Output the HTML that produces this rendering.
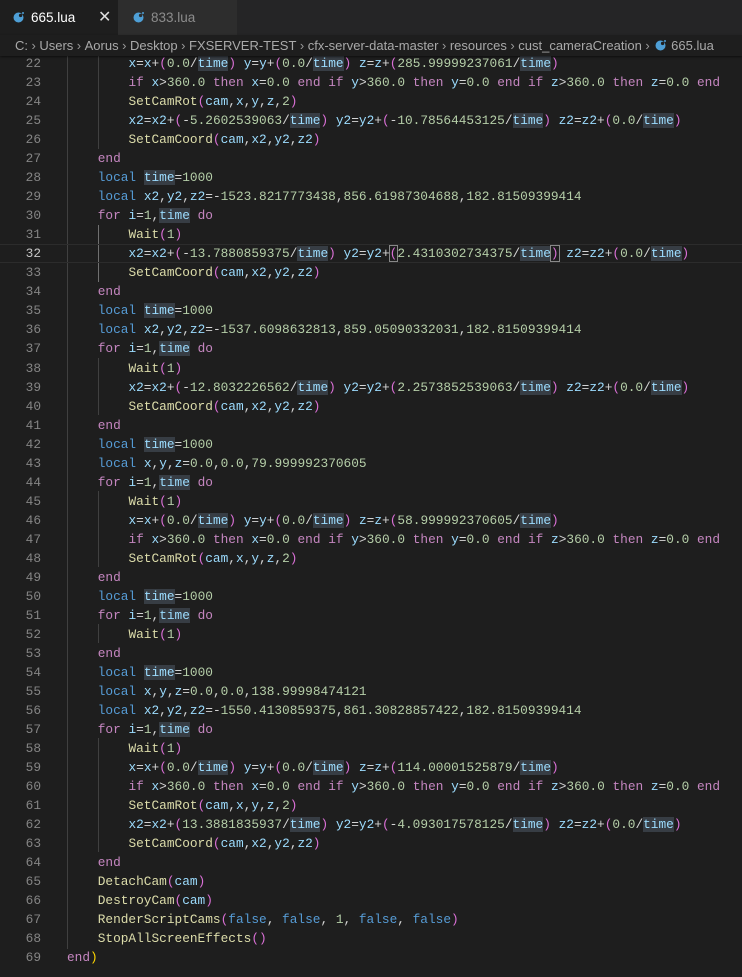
<!DOCTYPE html>
<html><head><meta charset="utf-8"><style>
*{margin:0;padding:0;box-sizing:border-box}
html,body{width:742px;height:977px;overflow:hidden}
body{background:#1e1e1e;position:relative;font-family:"Liberation Sans",sans-serif}
#tabs{position:absolute;left:0;top:0;width:742px;height:35px;background:#252526}
.tab{position:absolute;top:0;height:35px;font-size:13.5px;line-height:35px}
#t1{left:0;width:118px;background:#1e1e1e;color:#fff}
#t2{left:118px;width:119px;background:#2d2d2d;color:#8c8c8c}
.ic{position:absolute;top:12px;width:11px;height:11px}
#bc{position:absolute;left:0;top:35px;width:742px;height:21px;background:#1e1e1e;color:#a9a9a9;font-size:13px;line-height:21px;padding-left:15px;white-space:nowrap;box-shadow:0 1px 2px #0008;z-index:2;overflow:hidden}
#bc s{text-decoration:none;color:#9a9a9a;margin:0 3.5px}
#code{position:absolute;left:0;top:54px;width:742px;font-family:"Liberation Mono",monospace;font-size:12.8px;line-height:19.04px;color:#d4d4d4}
.ln{position:relative;height:19.04px}
.ln b{position:absolute;left:0;width:41px;text-align:right;font-weight:normal;color:#858585}
.ln i{position:absolute;left:67px;font-style:normal;white-space:pre}
.cur{border-top:1px solid #2c2c2c;border-bottom:1px solid #2c2c2c;line-height:17px}
.cur b{color:#c6c6c6}
v{color:#9cdcfe}n{color:#b5cea8}k{color:#c586c0}l{color:#569cd6}f{color:#dcdcaa}c{color:#da70d6}g{color:#ffd700}
t{color:#9cdcfe;background:#373d44}
.gd{position:absolute;width:1px;background:#404040}
</style></head><body>
<div id="tabs">
<div class="tab" id="t1"><svg class="ic" style="left:13px" viewBox="0 0 11 11"><circle cx="5.5" cy="5.5" r="5" fill="#4e9fd6"/><circle cx="7.6" cy="3.4" r="1.7" fill="#1e1e1e"/><circle cx="10" cy="1" r="1" fill="#4e9fd6"/></svg><span style="position:absolute;left:31px">665.lua</span><span style="position:absolute;left:98px;font-size:16px;color:#ddd">✕</span></div>
<div class="tab" id="t2"><svg class="ic" style="left:15px" viewBox="0 0 11 11"><circle cx="5.5" cy="5.5" r="5" fill="#4e9fd6"/><circle cx="7.6" cy="3.4" r="1.7" fill="#2d2d2d"/><circle cx="10" cy="1" r="1" fill="#4e9fd6"/></svg><span style="position:absolute;left:33px">833.lua</span></div>
</div>
<div id="bc">C:<s>›</s>Users<s>›</s>Aorus<s>›</s>Desktop<s>›</s>FXSERVER-TEST<s>›</s>cfx-server-data-master<s>›</s>resources<s>›</s>cust_cameraCreation<s>›</s><svg style="vertical-align:-1px;margin:0 5px 0 2px" width="11" height="11" viewBox="0 0 11 11"><circle cx="5.5" cy="5.5" r="5" fill="#4e9fd6"/><circle cx="7.6" cy="3.4" r="1.7" fill="#1e1e1e"/><circle cx="10" cy="1" r="1" fill="#4e9fd6"/></svg>665.lua</div>
<div class="gd" style="left:67px;top:54px;height:895px"></div>
<div class="gd" style="left:98px;top:54px;height:95px"></div>
<div class="gd" style="left:98px;top:225px;height:57px;background:#707070"></div>
<div class="gd" style="left:98px;top:358px;height:57px"></div>
<div class="gd" style="left:98px;top:491px;height:76px"></div>
<div class="gd" style="left:98px;top:624px;height:19px"></div>
<div class="gd" style="left:98px;top:738px;height:114px"></div>
<div id="code">
<div class="ln"><b>22</b><i>        <v>x</v>=<v>x</v>+<c>(</c><n>0.0</n>/<t>time</t><c>)</c> <v>y</v>=<v>y</v>+<c>(</c><n>0.0</n>/<t>time</t><c>)</c> <v>z</v>=<v>z</v>+<c>(</c><n>285.99999237061</n>/<t>time</t><c>)</c></i></div>
<div class="ln"><b>23</b><i>        <k>if</k> <v>x</v>&gt;<n>360.0</n> <k>then</k> <v>x</v>=<n>0.0</n> <k>end</k> <k>if</k> <v>y</v>&gt;<n>360.0</n> <k>then</k> <v>y</v>=<n>0.0</n> <k>end</k> <k>if</k> <v>z</v>&gt;<n>360.0</n> <k>then</k> <v>z</v>=<n>0.0</n> <k>end</k></i></div>
<div class="ln"><b>24</b><i>        <f>SetCamRot</f><c>(</c><v>cam</v>,<v>x</v>,<v>y</v>,<v>z</v>,<n>2</n><c>)</c></i></div>
<div class="ln"><b>25</b><i>        <v>x2</v>=<v>x2</v>+<c>(</c>-<n>5.2602539063</n>/<t>time</t><c>)</c> <v>y2</v>=<v>y2</v>+<c>(</c>-<n>10.78564453125</n>/<t>time</t><c>)</c> <v>z2</v>=<v>z2</v>+<c>(</c><n>0.0</n>/<t>time</t><c>)</c></i></div>
<div class="ln"><b>26</b><i>        <f>SetCamCoord</f><c>(</c><v>cam</v>,<v>x2</v>,<v>y2</v>,<v>z2</v><c>)</c></i></div>
<div class="ln"><b>27</b><i>    <k>end</k></i></div>
<div class="ln"><b>28</b><i>    <l>local</l> <t>time</t>=<n>1000</n></i></div>
<div class="ln"><b>29</b><i>    <l>local</l> <v>x2</v>,<v>y2</v>,<v>z2</v>=-<n>1523.8217773438</n>,<n>856.61987304688</n>,<n>182.81509399414</n></i></div>
<div class="ln"><b>30</b><i>    <k>for</k> <v>i</v>=<n>1</n>,<t>time</t> <k>do</k></i></div>
<div class="ln"><b>31</b><i>        <f>Wait</f><c>(</c><n>1</n><c>)</c></i></div>
<div class="ln cur"><b>32</b><i>        <v>x2</v>=<v>x2</v>+<c>(</c>-<n>13.7880859375</n>/<t>time</t><c>)</c> <v>y2</v>=<v>y2</v>+<c style="outline:1px solid #888">(</c><n>2.4310302734375</n>/<t>time</t><c style="outline:1px solid #888">)</c> <v>z2</v>=<v>z2</v>+<c>(</c><n>0.0</n>/<t>time</t><c>)</c></i></div>
<div class="ln"><b>33</b><i>        <f>SetCamCoord</f><c>(</c><v>cam</v>,<v>x2</v>,<v>y2</v>,<v>z2</v><c>)</c></i></div>
<div class="ln"><b>34</b><i>    <k>end</k></i></div>
<div class="ln"><b>35</b><i>    <l>local</l> <t>time</t>=<n>1000</n></i></div>
<div class="ln"><b>36</b><i>    <l>local</l> <v>x2</v>,<v>y2</v>,<v>z2</v>=-<n>1537.6098632813</n>,<n>859.05090332031</n>,<n>182.81509399414</n></i></div>
<div class="ln"><b>37</b><i>    <k>for</k> <v>i</v>=<n>1</n>,<t>time</t> <k>do</k></i></div>
<div class="ln"><b>38</b><i>        <f>Wait</f><c>(</c><n>1</n><c>)</c></i></div>
<div class="ln"><b>39</b><i>        <v>x2</v>=<v>x2</v>+<c>(</c>-<n>12.8032226562</n>/<t>time</t><c>)</c> <v>y2</v>=<v>y2</v>+<c>(</c><n>2.2573852539063</n>/<t>time</t><c>)</c> <v>z2</v>=<v>z2</v>+<c>(</c><n>0.0</n>/<t>time</t><c>)</c></i></div>
<div class="ln"><b>40</b><i>        <f>SetCamCoord</f><c>(</c><v>cam</v>,<v>x2</v>,<v>y2</v>,<v>z2</v><c>)</c></i></div>
<div class="ln"><b>41</b><i>    <k>end</k></i></div>
<div class="ln"><b>42</b><i>    <l>local</l> <t>time</t>=<n>1000</n></i></div>
<div class="ln"><b>43</b><i>    <l>local</l> <v>x</v>,<v>y</v>,<v>z</v>=<n>0.0</n>,<n>0.0</n>,<n>79.999992370605</n></i></div>
<div class="ln"><b>44</b><i>    <k>for</k> <v>i</v>=<n>1</n>,<t>time</t> <k>do</k></i></div>
<div class="ln"><b>45</b><i>        <f>Wait</f><c>(</c><n>1</n><c>)</c></i></div>
<div class="ln"><b>46</b><i>        <v>x</v>=<v>x</v>+<c>(</c><n>0.0</n>/<t>time</t><c>)</c> <v>y</v>=<v>y</v>+<c>(</c><n>0.0</n>/<t>time</t><c>)</c> <v>z</v>=<v>z</v>+<c>(</c><n>58.999992370605</n>/<t>time</t><c>)</c></i></div>
<div class="ln"><b>47</b><i>        <k>if</k> <v>x</v>&gt;<n>360.0</n> <k>then</k> <v>x</v>=<n>0.0</n> <k>end</k> <k>if</k> <v>y</v>&gt;<n>360.0</n> <k>then</k> <v>y</v>=<n>0.0</n> <k>end</k> <k>if</k> <v>z</v>&gt;<n>360.0</n> <k>then</k> <v>z</v>=<n>0.0</n> <k>end</k></i></div>
<div class="ln"><b>48</b><i>        <f>SetCamRot</f><c>(</c><v>cam</v>,<v>x</v>,<v>y</v>,<v>z</v>,<n>2</n><c>)</c></i></div>
<div class="ln"><b>49</b><i>    <k>end</k></i></div>
<div class="ln"><b>50</b><i>    <l>local</l> <t>time</t>=<n>1000</n></i></div>
<div class="ln"><b>51</b><i>    <k>for</k> <v>i</v>=<n>1</n>,<t>time</t> <k>do</k></i></div>
<div class="ln"><b>52</b><i>        <f>Wait</f><c>(</c><n>1</n><c>)</c></i></div>
<div class="ln"><b>53</b><i>    <k>end</k></i></div>
<div class="ln"><b>54</b><i>    <l>local</l> <t>time</t>=<n>1000</n></i></div>
<div class="ln"><b>55</b><i>    <l>local</l> <v>x</v>,<v>y</v>,<v>z</v>=<n>0.0</n>,<n>0.0</n>,<n>138.99998474121</n></i></div>
<div class="ln"><b>56</b><i>    <l>local</l> <v>x2</v>,<v>y2</v>,<v>z2</v>=-<n>1550.4130859375</n>,<n>861.30828857422</n>,<n>182.81509399414</n></i></div>
<div class="ln"><b>57</b><i>    <k>for</k> <v>i</v>=<n>1</n>,<t>time</t> <k>do</k></i></div>
<div class="ln"><b>58</b><i>        <f>Wait</f><c>(</c><n>1</n><c>)</c></i></div>
<div class="ln"><b>59</b><i>        <v>x</v>=<v>x</v>+<c>(</c><n>0.0</n>/<t>time</t><c>)</c> <v>y</v>=<v>y</v>+<c>(</c><n>0.0</n>/<t>time</t><c>)</c> <v>z</v>=<v>z</v>+<c>(</c><n>114.00001525879</n>/<t>time</t><c>)</c></i></div>
<div class="ln"><b>60</b><i>        <k>if</k> <v>x</v>&gt;<n>360.0</n> <k>then</k> <v>x</v>=<n>0.0</n> <k>end</k> <k>if</k> <v>y</v>&gt;<n>360.0</n> <k>then</k> <v>y</v>=<n>0.0</n> <k>end</k> <k>if</k> <v>z</v>&gt;<n>360.0</n> <k>then</k> <v>z</v>=<n>0.0</n> <k>end</k></i></div>
<div class="ln"><b>61</b><i>        <f>SetCamRot</f><c>(</c><v>cam</v>,<v>x</v>,<v>y</v>,<v>z</v>,<n>2</n><c>)</c></i></div>
<div class="ln"><b>62</b><i>        <v>x2</v>=<v>x2</v>+<c>(</c><n>13.3881835937</n>/<t>time</t><c>)</c> <v>y2</v>=<v>y2</v>+<c>(</c>-<n>4.093017578125</n>/<t>time</t><c>)</c> <v>z2</v>=<v>z2</v>+<c>(</c><n>0.0</n>/<t>time</t><c>)</c></i></div>
<div class="ln"><b>63</b><i>        <f>SetCamCoord</f><c>(</c><v>cam</v>,<v>x2</v>,<v>y2</v>,<v>z2</v><c>)</c></i></div>
<div class="ln"><b>64</b><i>    <k>end</k></i></div>
<div class="ln"><b>65</b><i>    <f>DetachCam</f><c>(</c><v>cam</v><c>)</c></i></div>
<div class="ln"><b>66</b><i>    <f>DestroyCam</f><c>(</c><v>cam</v><c>)</c></i></div>
<div class="ln"><b>67</b><i>    <f>RenderScriptCams</f><c>(</c><l>false</l>, <l>false</l>, <n>1</n>, <l>false</l>, <l>false</l><c>)</c></i></div>
<div class="ln"><b>68</b><i>    <f>StopAllScreenEffects</f><c>()</c></i></div>
<div class="ln"><b>69</b><i><k>end</k><g>)</g></i></div>
</div>
</body></html>
